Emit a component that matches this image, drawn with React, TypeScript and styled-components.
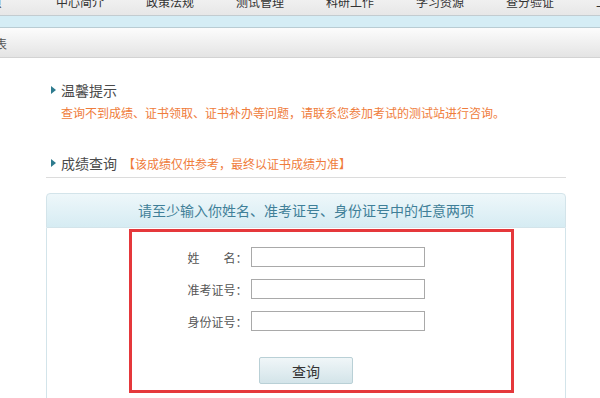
import React from "react";
import styled, { createGlobalStyle } from "styled-components";

const Global = createGlobalStyle`
  html, body { margin: 0; padding: 0; background: #ffffff; overflow: hidden; }
  body { font-family: "Noto Sans CJK SC", "Noto Sans", sans-serif; width: 600px; }
  #root { width: 600px; overflow: hidden; }
  * { box-sizing: border-box; }
`;

const Page = styled.div`
  width: 600px;
  height: 398px;
  overflow: hidden;
  background: #fff;
`;

const Nav = styled.nav`
  height: 16px;
  overflow: hidden;
  display: flex;
  margin-left: -55px;
  width: 720px;
  background: linear-gradient(#f0f0f0, #e7e7e7);
  border-bottom: 1px solid #c3ccd0;
`;

const NavItem = styled.span`
  flex: 0 0 90px;
  text-align: center;
  font-size: 12px;
  line-height: 12px;
  margin-top: -4px;
  color: #333;
`;

const Band = styled.div`
  height: 12px;
  background: #d5edf5;
  border-bottom: 1px solid #b9ccd3;
`;

const Crumb = styled.div`
  height: 30px;
  background: linear-gradient(#fcfcfc, #e4e4e4);
  border-bottom: 1px solid #d3d3d3;
  display: flex;
  align-items: center;
  font-size: 12px;
  color: #555;
  padding-top: 1px;
`;

const CrumbText = styled.span`
  margin-left: -29px;
  white-space: nowrap;
`;

const Content = styled.div`
  margin-left: 46px;
  width: 520px;
  padding-top: 22px;
`;

const Title = styled.div<{ $ruled?: boolean }>`
  display: flex;
  align-items: center;
  height: 20px;
  padding-left: 5px;
  font-size: 14px;
  color: #4a4a4a;
  ${(p) =>
    p.$ruled
      ? `padding-bottom: 4px; border-bottom: 1px solid #dcdcdc; box-sizing: content-box;`
      : ""}
`;

const Arrow = styled.i`
  width: 0;
  height: 0;
  border-left: 5px solid #2e7b8e;
  border-top: 4px solid transparent;
  border-bottom: 4px solid transparent;
  margin-right: 5px;
`;

const Note = styled.div`
  margin-top: 4px;
  padding-left: 15px;
  font-size: 12px;
  line-height: 18px;
  color: #ef7c3b;
`;

const Hint = styled.span`
  margin-left: 6px;
  font-size: 12px;
  color: #ef7c3b;
`;

const Section = styled.div`
  margin-top: 31px;
`;

const Panel = styled.div`
  position: relative;
  margin-top: 15px;
`;

const PanelHead = styled.div`
  height: 35px;
  border: 1px solid #d3e4ea;
  border-radius: 4px 4px 0 0;
  background: linear-gradient(#eef7fa, #d6ecf3);
  display: flex;
  align-items: center;
  justify-content: center;
  font-size: 14px;
  color: #3f7f98;
  padding-bottom: 1px;
`;

const PanelBody = styled.div`
  border-left: 1px solid #d3e4ea;
  border-right: 1px solid #d3e4ea;
  padding: 19px 0 40px;
  display: flex;
  flex-direction: column;
  align-items: center;
`;

const Form = styled.div`
  display: grid;
  grid-template-columns: 60px 174px;
  column-gap: 3px;
  row-gap: 12px;
  align-items: center;
`;

const Label = styled.label`
  font-size: 12px;
  color: #555;
  white-space: pre;
  text-align: right;
`;

const Field = styled.input`
  width: 174px;
  height: 20px;
  border: 1px solid #a9a9a9;
  background: #fff;
  margin: 0;
  padding: 0 3px;
`;

const Button = styled.button`
  margin-top: 26px;
  width: 94px;
  height: 27px;
  border: 1px solid #b9d0d6;
  border-radius: 2px;
  background: linear-gradient(#f0f6f8, #d3e4e9);
  font-family: "Noto Sans CJK SC", sans-serif;
  font-size: 14px;
  color: #333;
  padding: 0;
`;

const RedBox = styled.div`
  position: absolute;
  left: 83px;
  top: 36px;
  width: 385px;
  height: 164px;
  border: 3px solid #e5383b;
  pointer-events: none;
`;

const navItems = ["首页", "中心简介", "政策法规", "测试管理", "科研工作", "学习资源", "查分验证", "上级单位"];

export default function App() {
  return (
    <Page>
      <Global />
      <Nav>
        {navItems.map((n) => (
          <NavItem key={n}>{n}</NavItem>
        ))}
      </Nav>
      <Band />
      <Crumb>
        <CrumbText>查询表</CrumbText>
      </Crumb>
      <Content>
        <Title>
          <Arrow />
          温馨提示
        </Title>
        <Note>查询不到成绩、证书领取、证书补办等问题，请联系您参加考试的测试站进行咨询。</Note>
        <Section>
          <Title $ruled>
            <Arrow />
            成绩查询
            <Hint>【该成绩仅供参考，最终以证书成绩为准】</Hint>
          </Title>
          <Panel>
            <PanelHead>请至少输入你姓名、准考证号、身份证号中的任意两项</PanelHead>
            <PanelBody>
              <Form>
                <Label>姓　　名：</Label>
                <Field type="text" />
                <Label>准考证号：</Label>
                <Field type="text" />
                <Label>身份证号：</Label>
                <Field type="text" />
              </Form>
              <Button type="button">查询</Button>
            </PanelBody>
            <RedBox />
          </Panel>
        </Section>
      </Content>
    </Page>
  );
}
